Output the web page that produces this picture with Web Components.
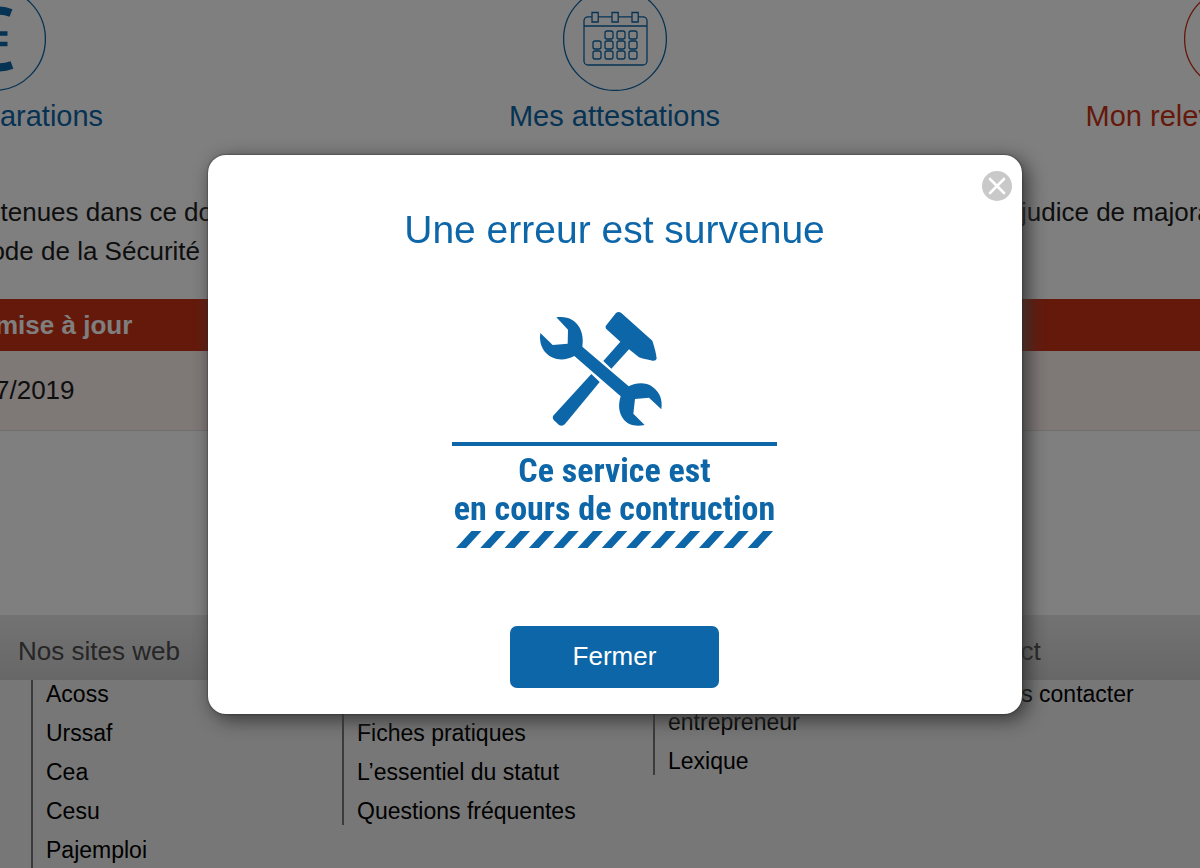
<!DOCTYPE html>
<html lang="fr">
<head>
<meta charset="utf-8">
<meta name="viewport" content="width=device-width, initial-scale=1">
<title>Une erreur est survenue</title>
<style>
  :root { --blue: #0d66a8; --red: #ca3216; }
  html, body { height: 100%; }
  body { margin: 0; overflow: hidden; background: #fff; color: #1c1c1c; font-family: "Liberation Sans", Arial, sans-serif; font-size: 26px; }
</style>
</head>
<body>
<account-page></account-page>
<error-dialog heading="Une erreur est survenue" action="Fermer">
  <work-notice></work-notice>
</error-dialog>

<script>
const define = (name, html, setup) => {
  const template = document.createElement('template');
  template.innerHTML = html;
  customElements.define(name, class extends HTMLElement {
    constructor() {
      super();
      this.attachShadow({ mode: 'open' }).append(template.content.cloneNode(true));
    }
    connectedCallback() { if (setup) setup(this, this.shadowRoot); }
  });
};

define('nav-tile', `
  <style>
    :host { display: block; color: var(--blue); text-align: center; }
    :host([current]) { color: var(--red); }
    a { display: flex; flex-direction: column; align-items: center; gap: 8px; color: inherit; text-decoration: none; font-size: 29px; line-height: 34px; white-space: nowrap; }
    ::slotted(svg) { display: block; width: 104px; height: 104px; fill: none; stroke: currentColor; }
  </style>
  <a href="#"><slot name="icon"></slot><span><slot></slot></span></a>`);

define('status-table', `
  <style>
    :host { display: block; }
    table { width: 100%; border-collapse: collapse; text-align: left; }
    th, td { padding: 0; text-indent: -5px; white-space: nowrap; }
    th { height: 52px; background: var(--red); color: #fff; }
    td { height: 79px; background: #fcf0ed; border-bottom: 1px solid #e4dcda; }
  </style>
  <table>
    <thead><tr><th scope="col">mise à jour</th></tr></thead>
    <tbody><tr><td>7/2019</td></tr></tbody>
  </table>`);

define('link-column', `
  <style>
    :host { display: block; font-size: 23px; line-height: 28px; }
    h2 { margin: 0; height: 65px; box-sizing: border-box; padding-top: 21px; font-size: 26px; line-height: 30px; font-weight: 400; color: #4c4c4c; }
    .list { margin-left: 13px; padding-left: 13px; border-left: 2px solid #777; display: flex; flex-direction: column; gap: 11px; }
    :host([long]) .list { padding-bottom: 11px; }
    ::slotted(a) { color: #000; text-decoration: none; white-space: nowrap; min-height: 28px; }
  </style>
  <h2></h2>
  <nav class="list"><slot></slot></nav>`,
  (host, root) => { root.querySelector('h2').textContent = host.getAttribute('heading') || ''; });

define('site-footer', `
  <style>
    :host { display: block; flex: 1; background: linear-gradient(#e6e6e6, #cfcfcf) top / 100% 65px no-repeat #efefef; }
    .columns { display: grid; grid-template-columns: repeat(4, 311px); align-items: start; padding-left: 18px; }
  </style>
  <div class="columns">
    <link-column heading="Nos sites web" long>
      <a href="#">Acoss</a><a href="#">Urssaf</a><a href="#">Cea</a><a href="#">Cesu</a><a href="#">Pajemploi</a>
    </link-column>
    <link-column>
      <a href="#"></a><a href="#">Fiches pratiques</a><a href="#">L’essentiel du statut</a><a href="#">Questions fréquentes</a>
    </link-column>
    <link-column>
      <a href="#"><br>entrepreneur</a><a href="#">Lexique</a>
    </link-column>
    <link-column heading="Contact">
      <a href="#">Nous contacter</a>
    </link-column>
  </div>`);

define('account-page', `
  <style>
    :host { display: flex; flex-direction: column; min-height: 100vh; overflow: hidden; }
    .tiles { display: grid; grid-template-columns: repeat(3, 621px); justify-content: center; margin-top: -13px; padding-left: 29px; height: 146px; }
    .legal { margin-top: 60px; height: 106px; line-height: 39px; }
    .row { display: flex; justify-content: space-between; white-space: nowrap; }
    .row span:first-child { width: 213px; display: flex; justify-content: flex-end; }
    .row span:last-child { width: 179px; }
    .row.second span:first-child { width: 200px; }
    status-table { height: 316px; }
  </style>
  <div class="tiles">
    <nav-tile>
      <svg slot="icon" viewBox="0 0 104 104" aria-hidden="true">
        <circle cx="52" cy="52" r="51.4" stroke-width="1.3"/>
        <path d="M69 26C48 18 34 32 34 52S48 86 70 78" stroke-width="8"/>
        <path d="M28 46.500H65.500M28 57H65.500" stroke-width="4.500"/>
      </svg>Mes déclarations
    </nav-tile>
    <nav-tile>
      <svg slot="icon" viewBox="0 0 104 104" stroke-width="1.300" aria-hidden="true">
        <circle cx="52" cy="52" r="51.4"/>
        <path d="M28.800 29.800H25a4 4 0 0 0-4 4V74a4 4 0 0 0 4 4H80a4 4 0 0 0 4-4V33.800a4 4 0 0 0-4-4H75.300M35.200 29.800H49M55.500 29.800H69M21 39H84"/>
        <path d="M29 25.500h6.200v9.500H29zM49 25.500h6.200v9.500H49zM69 25.500h6.200v9.500H69z"/>
        <g>
          <rect x="42" y="44" width="8" height="8" rx="2"/><rect x="54" y="44" width="8" height="8" rx="2"/><rect x="66" y="44" width="8" height="8" rx="2"/>
          <rect x="30" y="54" width="8" height="8" rx="2"/><rect x="42" y="54" width="8" height="8" rx="2"/><rect x="54" y="54" width="8" height="8" rx="2"/><rect x="66" y="54" width="8" height="8" rx="2"/>
          <rect x="30" y="64" width="8" height="8" rx="2"/><rect x="42" y="64" width="8" height="8" rx="2"/><rect x="54" y="64" width="8" height="8" rx="2"/><rect x="66" y="64" width="8" height="8" rx="2"/>
        </g>
      </svg>Mes attestations
    </nav-tile>
    <nav-tile current>
      <svg slot="icon" viewBox="0 0 104 104" aria-hidden="true"><circle cx="52" cy="52" r="51.4" stroke-width="1.3"/></svg>Mon relevé de situation
    </nav-tile>
  </div>
  <div class="legal">
    <div class="row"><span>tenues dans ce do</span><span>judice de majorations</span></div>
    <div class="row second"><span>ode de la Sécurité</span></div>
  </div>
  <status-table></status-table>
  <site-footer></site-footer>`);

define('work-notice', `
  <style>
    :host { display: flex; flex-direction: column; align-items: center; width: 325px; color: var(--blue); }
    svg { display: block; fill: currentColor; }
    .tools { width: 128px; height: 118px; margin-right: 27px; }
    p { width: 100%; box-sizing: border-box; margin: 14px 0 0; padding-top: 5px; border-top: 4px solid; text-align: center; white-space: nowrap;
        font: 700 34px/38px "DIN Condensed", "Roboto Condensed", "Liberation Sans Narrow", "Open Sans Condensed", "Liberation Sans", sans-serif; }
    .hazard { width: 318px; height: 17px; margin-top: 4px; }
  </style>
  <svg class="tools" viewBox="291 60 384 354" aria-hidden="true">
    <path d="M528 69Q536 63 544 69L637 152Q648 185 650 206Q648 213 638 212Q612 208 597 202L567 178L514 236L490 213L541 155L499 117Q494 110 500 104Z"/>
    <path d="M454 252L479 276L375 402Q367 410 357 405L342 391Q335 384 341 376Z"/>
    <path d="M349 82C380 77 405 88 418 112C428 130 430 150 427 170L566 289C590 277 617 277 637 290C661 308 668 330 664 358L627 323L585 327L580 371L614 405C585 411 562 404 550 387C536 368 534 345 542 319L403 198C385 208 367 210 350 207C325 202 308 183 302 160Q298 143 301 129L338 165L383 161L384 119Z"/>
  </svg>
  <p>Ce service est<br>en cours de contruction</p>
  <svg class="hazard" viewBox="0 0 318 17" aria-hidden="true"></svg>`,
  (host, root) => {
    const bars = Array.from({ length: 13 }, (_, i) => `M${i * 24.3} 17l15.500-17h10l-15.500 17z`).join('');
    root.querySelector('.hazard').innerHTML = `<path d="${bars}"/>`;
  });

define('error-dialog', `
  <style>
    :host { position: fixed; inset: 0; display: flex; justify-content: center; align-items: flex-start; box-sizing: border-box; padding: 155px 0 0 29px; background: rgba(0, 0, 0, .5); }
    section { position: relative; box-sizing: border-box; width: 100%; max-width: 814px; padding: 51px 32px 26px; border-radius: 18px; background: #fff; box-shadow: 0 0 2px #222, 5px 5px 20px #333;
              display: flex; flex-direction: column; align-items: center; }
    h1 { margin: 0 0 56px; font-size: 39px; line-height: 48px; font-weight: 400; color: var(--blue); text-align: center; }
    button { border: 0; padding: 0; font: inherit; cursor: pointer; }
    .close { position: absolute; top: 16px; right: 10px; width: 30px; height: 30px; border-radius: 50%; background: #c9c9c9; }
    .close svg { display: block; width: 30px; height: 30px; stroke: #fff; stroke-width: 2.6; stroke-linecap: round; }
    .action { width: 209px; height: 62px; margin-top: 78px; border-radius: 7px; background: var(--blue); color: #fff; line-height: 60px; padding-bottom: 2px; }
  </style>
  <section role="dialog" aria-modal="true" aria-labelledby="title">
    <button class="close" type="button" aria-label="Fermer la fenêtre"><svg viewBox="0 0 30 30" aria-hidden="true"><path d="M8 8L22 22M22 8L8 22"/></svg></button>
    <h1 id="title"></h1>
    <slot></slot>
    <button class="action" type="button"></button>
  </section>`,
  (host, root) => {
    root.querySelector('h1').textContent = host.getAttribute('heading');
    root.querySelector('.action').textContent = host.getAttribute('action');
  });
</script>
</body>
</html>
